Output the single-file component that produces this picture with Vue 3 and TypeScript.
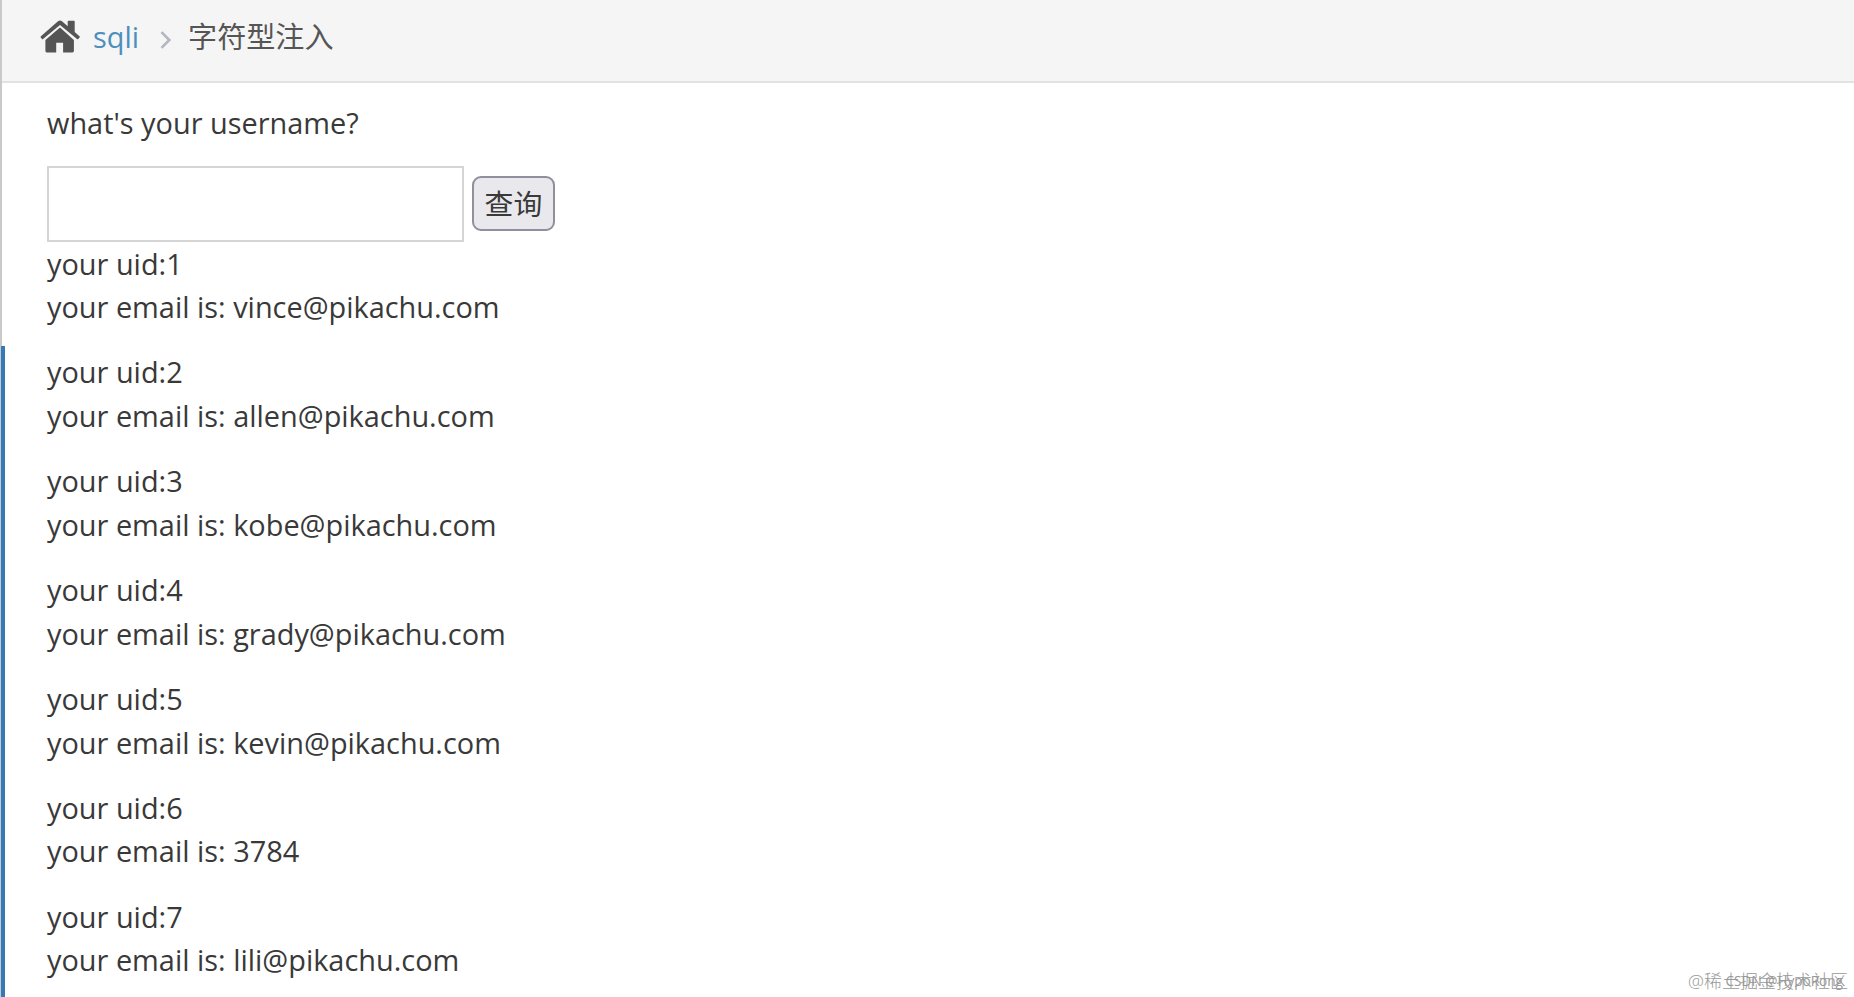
<script setup lang="ts">
import { ref } from 'vue'

interface Row {
  uid: number
  email: string
}

const rows: Row[] = [
  { uid: 1, email: 'vince@pikachu.com' },
  { uid: 2, email: 'allen@pikachu.com' },
  { uid: 3, email: 'kobe@pikachu.com' },
  { uid: 4, email: 'grady@pikachu.com' },
  { uid: 5, email: 'kevin@pikachu.com' },
  { uid: 6, email: '3784' },
  { uid: 7, email: 'lili@pikachu.com' },
]

const name = ref('')
</script>

<template>
  <div class="page">
    <div class="active-bar"></div>
    <nav class="breadcrumbs">
      <svg class="home" viewBox="0 0 40 33" aria-hidden="true">
        <path d="M20 7.6 5.4 20V31q0 1.4 1.4 1.4h9.4v-9.7h6.9v9.7h9.4q1.4 0 1.4-1.4V20z" />
        <path d="M.9 16.2 18 1.3q2-1.5 4 0l5.7 4.9V1.6q0-.8.8-.8h5.4q.8 0 .8.8v10.4l4.8 4.2q.6.6.1 1.2l-1.4 1.5q-.6.5-1.2 0L20 4.9 3.1 18.9q-.6.5-1.2 0L.8 17.4q-.5-.6.1-1.2z" />
      </svg>
      <a class="link" href="#">sqli</a>
      <svg class="chevron" viewBox="0 0 12 18" aria-hidden="true">
        <path d="M1.5 1.2 9.3 9l-7.8 7.8" />
      </svg>
      <span class="current">字符型注入</span>
    </nav>

    <main class="content">
      <p class="title">what's your username?</p>
      <form class="query" @submit.prevent>
        <input v-model="name" class="field" type="text" name="name" />
        <button class="submit" type="submit">查询</button>
      </form>
      <p v-for="row in rows" :key="row.uid" class="notice">
        your uid:{{ row.uid }}<br />your email is: {{ row.email }}
      </p>
    </main>

    <div class="watermark">
      <span class="community">@稀土掘金技术社区</span>
      <span class="author">CSDN @HypoRong</span>
    </div>
  </div>
</template>

<style>
body {
  margin: 0;
  overflow: hidden;
}
</style>

<style scoped>
.page {
  position: relative;
  box-sizing: border-box;
  height: 997px;
  border-left: 2px solid #c9c9c9;
  background: #fff;
  color: #393939;
  font-family: 'Open Sans', 'Noto Sans CJK SC', sans-serif;
  font-size: 28.9px;
  line-height: 43.5px;
}
.active-bar {
  position: absolute;
  top: 346px;
  bottom: 0;
  left: -1px;
  width: 4px;
  background: #337ab7;
}
.breadcrumbs {
  display: flex;
  align-items: flex-start;
  box-sizing: border-box;
  height: 83px;
  padding: 15px 0 0 38px;
  border-bottom: 2px solid #e2e2e2;
  background: #f5f5f5;
  color: #555;
}
.home {
  width: 40px;
  height: 33px;
  margin-top: 5px;
  fill: #555;
}
.link {
  margin-left: 13px;
  color: #4c8fbd;
  text-decoration: none;
}
.chevron {
  width: 12px;
  height: 18px;
  margin: 16px 16px 0 21px;
  fill: none;
  stroke: #b2b6bf;
  stroke-width: 2.6;
}
.current {
  padding-top: 1px;
  font-size: 29.1px;
}
.content {
  padding: 18px 0 0 45px;
}
.title {
  margin: 0 0 21px;
}
.query {
  display: flex;
  align-items: center;
  gap: 8px;
  height: 76px;
}
.field {
  box-sizing: border-box;
  width: 417px;
  height: 76px;
  padding: 0 8px;
  border: 2px solid #d5d5d5;
  font: inherit;
}
.submit {
  box-sizing: border-box;
  width: 83px;
  height: 55px;
  padding: 1px 0 0;
  border: 2px solid #8f8f9d;
  border-radius: 9px;
  background: #e9e9ed;
  color: #393939;
  font: inherit;
}
.notice {
  margin: 0 0 21.9px;
}
.watermark {
  position: absolute;
  right: 6px;
  bottom: 4px;
  line-height: 24px;
  white-space: nowrap;
}
.community {
  color: #999;
  font-size: 18px;
  font-weight: 300;
}
.author {
  position: absolute;
  top: 4px;
  right: 5px;
  color: #999;
  font-size: 13.6px;
}
</style>
